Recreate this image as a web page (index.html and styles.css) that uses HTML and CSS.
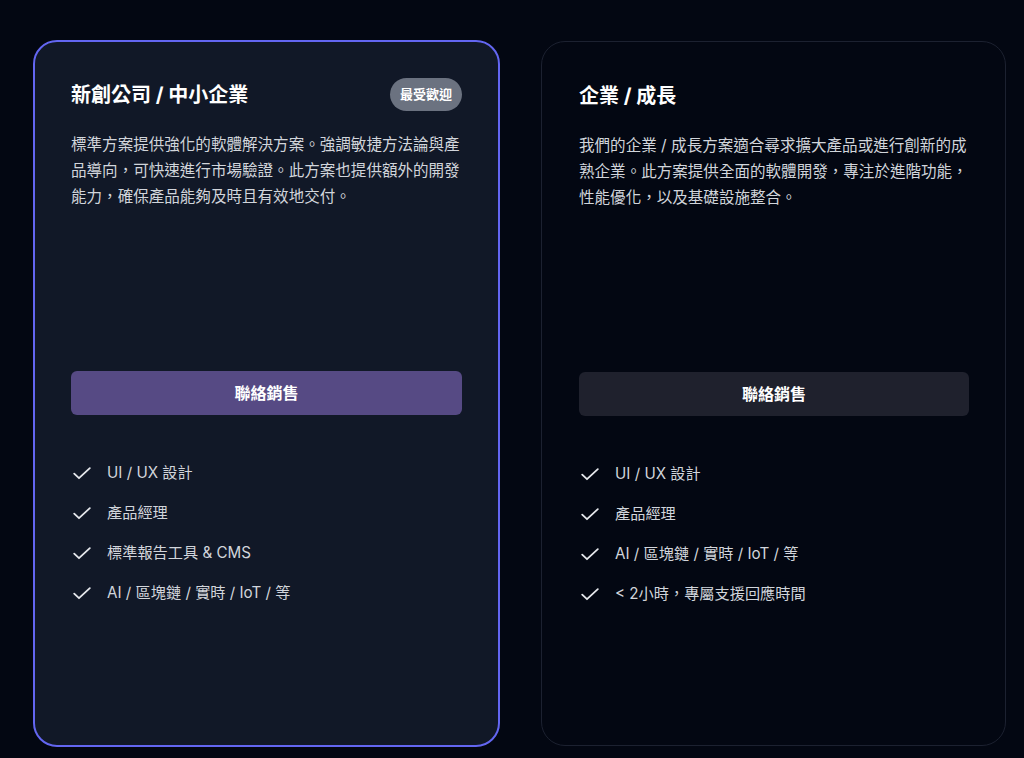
FILE: index.html
```html
<!DOCTYPE html>
<html lang="zh-Hant">
<head>
<meta charset="utf-8">
<title>方案</title>
<link rel="stylesheet" href="styles.css">
</head>
<body>
<div class="plans">
  <section class="card card-featured">
    <div class="card-head">
      <h3 class="card-title">新創公司 / 中小企業</h3>
      <span class="badge">最受歡迎</span>
    </div>
    <p class="card-desc">標準方案提供強化的軟體解決方案。強調敏捷方法論與產品導向，可快速進行市場驗證。此方案也提供額外的開發能力，確保產品能夠及時且有效地交付。</p>
    <a class="btn btn-primary" href="#">聯絡銷售</a>
    <ul class="features">
      <li><svg class="check" viewBox="0 0 18 13" aria-hidden="true"><polyline points="1.2,6.6 6,11.2 16.8,1.2"/></svg><span>UI / UX 設計</span></li>
      <li><svg class="check" viewBox="0 0 18 13" aria-hidden="true"><polyline points="1.2,6.6 6,11.2 16.8,1.2"/></svg><span>產品經理</span></li>
      <li><svg class="check" viewBox="0 0 18 13" aria-hidden="true"><polyline points="1.2,6.6 6,11.2 16.8,1.2"/></svg><span>標準報告工具 &amp; CMS</span></li>
      <li><svg class="check" viewBox="0 0 18 13" aria-hidden="true"><polyline points="1.2,6.6 6,11.2 16.8,1.2"/></svg><span>AI / 區塊鏈 / 實時 / IoT / 等</span></li>
    </ul>
  </section>
  <section class="card card-plain">
    <div class="card-head">
      <h3 class="card-title">企業 / 成長</h3>
    </div>
    <p class="card-desc">我們的企業 / 成長方案適合尋求擴大產品或進行創新的成熟企業。此方案提供全面的軟體開發，專注於進階功能，性能優化，以及基礎設施整合。</p>
    <a class="btn btn-dark" href="#">聯絡銷售</a>
    <ul class="features">
      <li><svg class="check" viewBox="0 0 18 13" aria-hidden="true"><polyline points="1.2,6.6 6,11.2 16.8,1.2"/></svg><span>UI / UX 設計</span></li>
      <li><svg class="check" viewBox="0 0 18 13" aria-hidden="true"><polyline points="1.2,6.6 6,11.2 16.8,1.2"/></svg><span>產品經理</span></li>
      <li><svg class="check" viewBox="0 0 18 13" aria-hidden="true"><polyline points="1.2,6.6 6,11.2 16.8,1.2"/></svg><span>AI / 區塊鏈 / 實時 / IoT / 等</span></li>
      <li><svg class="check" viewBox="0 0 18 13" aria-hidden="true"><polyline points="1.2,6.6 6,11.2 16.8,1.2"/></svg><span>&lt; 2小時，專屬支援回應時間</span></li>
    </ul>
  </section>
</div>
</body>
</html>
```
FILE: styles.css
```css
* { box-sizing: border-box; }
html, body {
  margin: 0;
  background: #030712;
  height: 100%;
  overflow: hidden;
}
body {
  font-family: Inter, "Noto Sans CJK TC", "Noto Sans", sans-serif;
  color: #d1d5db;
}
.plans {
  display: grid;
  grid-template-columns: 467px 465px;
  column-gap: 41px;
  align-items: start;
  padding: 40px 0 0 33px;
}
.card {
  display: flex;
  flex-direction: column;
  border-radius: 24px;
}
.card-featured {
  height: 707px;
  background: #111827;
  border: 2px solid #6366f1;
  padding: 36px;
}
.card-plain {
  height: 705px;
  margin-top: 1px;
  background: #030712;
  border: 1px solid #1c2130;
  padding: 37px 36px 37px 37px;
}
.card-head {
  display: flex;
  align-items: center;
  justify-content: space-between;
  min-height: 33px;
}
.card-title {
  margin: 0;
  font-size: 20px;
  line-height: 28px;
  font-weight: 700;
  color: #ffffff;
}
.badge {
  display: inline-block;
  background: #6b7280;
  color: #ffffff;
  font-size: 13px;
  font-weight: 700;
  line-height: 21px;
  padding: 6px 10px;
  border-radius: 999px;
}
.card-desc {
  margin: 21px 0 0;
  min-height: 239px;
  font-size: 15.55px;
  line-height: 26px;
  color: #d1d5db;
}
.btn {
  display: block;
  height: 44px;
  line-height: 44px;
  text-align: center;
  border-radius: 6px;
  font-size: 16px;
  font-weight: 700;
  color: #ffffff;
  text-decoration: none;
}
.btn-primary { background: #564a84; }
.btn-dark { background: #1f212d; }
.features {
  list-style: none;
  margin: 46px 0 0;
  padding: 0;
  display: flex;
  flex-direction: column;
  gap: 16px;
}
.features li {
  display: flex;
  align-items: center;
  gap: 16px;
  font-size: 15.2px;
  line-height: 24px;
  color: #d1d5db;
}
.check {
  width: 18px;
  height: 13px;
  margin-left: 2px;
  flex: none;
  fill: none;
  stroke: #e5e7eb;
  stroke-width: 1.8;
  stroke-linecap: round;
  stroke-linejoin: round;
}
```
